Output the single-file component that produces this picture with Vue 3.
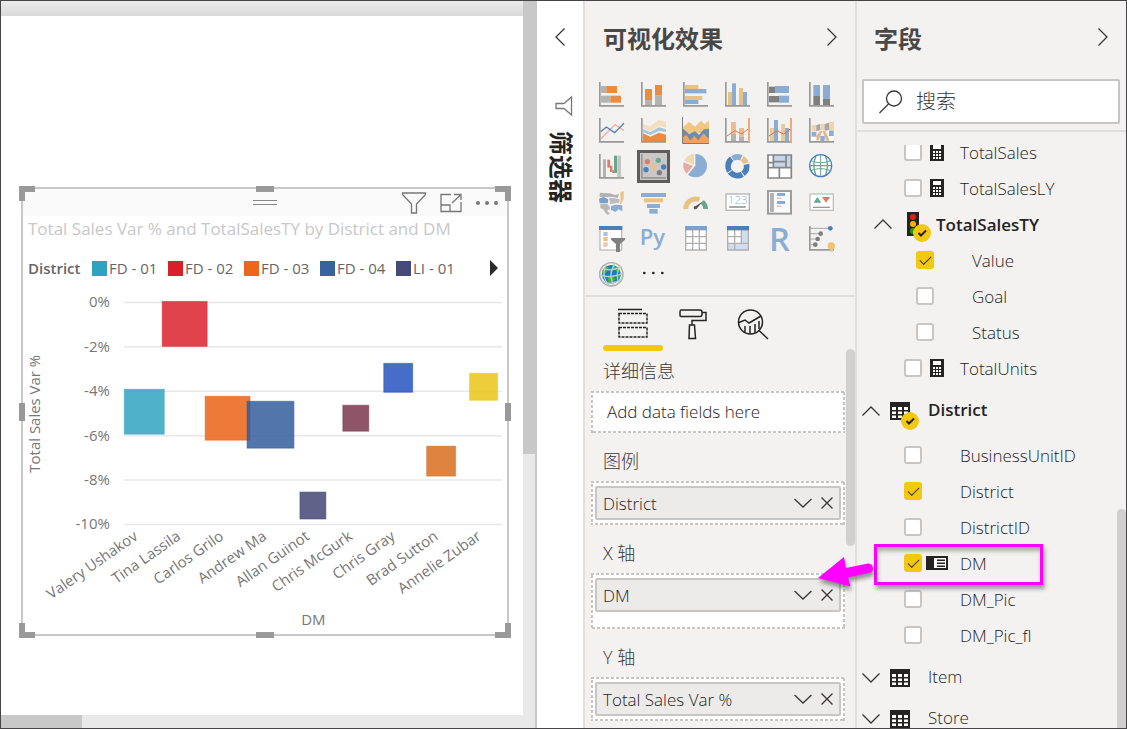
<script setup>
import { ref } from 'vue'

const legend = [
  { name: 'FD - 01', color: '#2ea3c0' },
  { name: 'FD - 02', color: '#db1f2a' },
  { name: 'FD - 03', color: '#ec661c' },
  { name: 'FD - 04', color: '#3962a0' },
  { name: 'LI - 01', color: '#464a78' }
]

const ticks = ['0%', '-2%', '-4%', '-6%', '-8%', '-10%'].map((label, i) => ({
  label,
  y: 302.5 + i * 44.5
}))

const points = [
  { name: 'Valery Ushakov', x: 124, y: 389, w: 41, h: 46, color: '#2ea3c0' },
  { name: 'Tina Lassila', x: 162, y: 301, w: 46, h: 46, color: '#db1f2a' },
  { name: 'Carlos Grilo', x: 205, y: 396, w: 46, h: 45, color: '#ea6012' },
  { name: 'Andrew Ma', x: 247, y: 401, w: 48, h: 48, color: '#315c9b' },
  { name: 'Allan Guinot', x: 300, y: 492, w: 27, h: 28, color: '#414474' },
  { name: 'Chris McGurk', x: 343, y: 405, w: 27, h: 27, color: '#77344a' },
  { name: 'Chris Gray', x: 384, y: 363, w: 30, h: 30, color: '#2252bd' },
  { name: 'Brad Sutton', x: 427, y: 446, w: 30, h: 31, color: '#d96c1b' },
  { name: 'Annelie Zubar', x: 470, y: 373, w: 29, h: 28, color: '#e9c414' }
]

const handles = ['tl', 'tc', 'tr', 'ml', 'mr', 'bl', 'bc', 'br']

const arc = (cx, cy, r, from, to) => {
  const at = (a) => {
    const t = ((a - 90) * Math.PI) / 180
    return `${(cx + r * Math.cos(t)).toFixed(1)} ${(cy + r * Math.sin(t)).toFixed(1)}`
  }
  return `M${at(from)}A${r} ${r} 0 ${to - from > 180 ? 1 : 0} 1 ${at(to)}`
}

const R = (x, y, x2, y2, fill) => ({ t: 'rect', x, y, width: x2 - x, height: y2 - y, fill })
const B = (x, y, x2, y2, stroke, w, fill = 'none') => ({
  t: 'rect', x, y, width: x2 - x, height: y2 - y, fill, stroke, 'stroke-width': w
})
const P = (d, fill) => ({ t: 'path', d, fill })
const L = (d, stroke, w = 4, fill = 'none') => ({ t: 'path', d, fill, stroke, 'stroke-width': w })
const C = (cx, cy, r, fill) => ({ t: 'circle', cx, cy, r, fill })
const axis = L('M14.5 12V83.500H87', '#999', 5)

const OR = '#e68c43', GR = '#b3b3b3', YE = '#e9c283', BL = '#8badd3', DK = '#7f7f7f', DB = '#4a7fb8', GN = '#6aa590', RD = '#e07b66'

const visuals = [
  { name: '堆积条形图', s: [R(18, 24, 34, 45, GR), R(34, 24, 66, 45, OR), R(18, 53, 46, 74, GR), R(46, 53, 78, 74, OR), axis] },
  { name: '堆积柱形图', s: [R(24, 33, 45, 66, OR), R(24, 66, 45, 82, GR), R(54, 21, 75, 53, OR), R(54, 53, 75, 82, GR), axis] },
  { name: '簇状条形图', s: [R(18, 21, 58, 33, YE), R(18, 33, 82, 46, BL), R(18, 54, 70, 66, YE), R(18, 66, 58, 78, BL), axis] },
  { name: '簇状柱形图', s: [R(21, 42, 33, 81, YE), R(33, 16, 45, 81, BL), R(54, 30, 66, 81, YE), R(66, 42, 78, 81, BL), axis] },
  { name: '百分比堆积条形图', s: [R(18, 26, 36, 45, DK), R(36, 24, 78, 45, BL), R(18, 54, 48, 73, DK), R(48, 53, 78, 74, BL), axis] },
  { name: '百分比堆积柱形图', s: [R(25, 21, 45, 54, BL), R(25, 54, 45, 82, DK), R(54, 21, 75, 62, BL), R(54, 62, 75, 82, DK), axis] },

  { name: '折线图', s: [L('M17 75L60 32L87 50', '#ecb3a6'), L('M17 53L34 39L59 56L87 28', DB), axis] },
  { name: '分区图', s: [P('M18 31L40 37L66 17L87 23V41L66 36L40 52L18 43Z', '#f3dfbf'), P('M18 45L40 54L66 40L87 46V54L66 51L40 63L18 54Z', '#a5c6dc'), P('M18 58L40 68L66 56L87 62V82H18Z', OR), axis] },
  { name: '堆积面积图', s: [P('M12 40L30 23L48 38L66 20L76 31L90 20V58H12Z', '#efc682'), P('M12 44L30 60L48 52L60 62L75 46L90 44V88H12Z', '#6c8dac'), P('M12 87V70L22 62L34 80L46 66L58 79L74 58L90 76V87Z', '#f0a266'), L('M10.500 9V88.500H90', '#7c7c7c', 3)] },
  { name: '折线和堆积柱形图', s: [R(30, 24, 45, 60, '#eeba92'), R(30, 60, 45, 82, GR), R(54, 42, 69, 68, '#eeba92'), R(54, 68, 69, 82, GR), L('M18 66L42 50L62 60L84 43', '#e07b50', 3), axis, R(81, 12, 87, 84, '#eeaa78')] },
  { name: '折线和簇状柱形图', s: [R(21, 42, 33, 82, '#e9cb98'), R(33, 18, 45, 82, BL), R(54, 30, 66, 82, '#e9cb98'), R(66, 42, 78, 82, BL), L('M18 66L42 50L62 60L84 43', '#d9694c', 3), axis, R(81, 12, 87, 84, '#eeaa78')] },
  { name: '功能区图表', s: [R(20, 33, 34, 52, '#efd4ad'), P('M34 33L46 30V48L34 52Z', '#a6a6a6'), R(46, 30, 59, 48, '#efd4ad'), P('M59 30L72 26V48L59 50Z', '#a6a6a6'), R(72, 24, 87, 50, '#efd4ad'), R(20, 54, 34, 68, BL), R(46, 50, 59, 64, '#fff'), P('M34 66L46 50H52L40 80H34Z', '#efb083'), P('M52 50H60L74 80H64Z', '#efb083'), R(46, 66, 59, 81, BL), R(72, 50, 86, 66, BL), R(20, 69, 34, 81, '#fff'), R(72, 66, 86, 81, '#fff'), axis] },

  { name: '瀑布图', s: [R(24, 28, 33, 82, GR), R(37, 29, 45, 53, RD), R(45, 47, 52, 66, RD), R(52, 60, 58, 69, RD), R(57, 17, 66, 69, GN), R(67, 17, 78, 82, '#c4c4c4'), axis] },
  { name: '散点图', selected: true, s: [axis, C(31, 35, 8, RD), C(64, 31, 8, GN), C(27, 59, 8, DB), C(51, 51, 8, YE), C(80, 51, 8, DB), C(67, 68, 8, DK)] },
  { name: '饼图', s: [P('M49 47V12A35 35 0 1 1 27 74Z', BL), P('M45 44V12A35 35 0 0 0 16 32Z', '#efd7ae'), P('M42 48L14 37A35 35 0 0 0 23 71Z', '#e9ab9b')] },
  { name: '圆环图', s: [L(arc(49, 49, 28, -31, 25), BL, 17), L(arc(49, 49, 28, 32, 70), YE, 17), L(arc(49, 49, 28, 78, 142), DB, 17), L(arc(49, 49, 28, 148, 232), DB, 17), L(arc(49, 49, 28, 238, 323), DB, 17)] },
  { name: '树状图', s: [R(15, 14, 85, 84, '#fff'), R(32, 14, 85, 52, '#c3d5ea'), L('M15 15H85V84H15ZM15 53H85M31 15V53M69 15V53M31 35H69M15 38H31M49 53V84', '#858585', 5)] },
  { name: '地图', s: [C(47, 47, 32, '#fff'), L('M18 32C36 40 58 40 76 32M18 62C36 54 58 54 76 62M47 15V79', GN, 3), L('M33 18C24 38 24 56 33 76M61 18C70 38 70 56 61 76M15 47H79', GN, 4), L('M47 14A33 33 0 1 0 47 80A33 33 0 1 0 47 14Z', DB, 4)] },

  { name: '着色地图', s: [P('M14 20L44 22L60 27L72 24L68 36L56 33H14Z', GR), P('M12 38L26 33L40 40L38 52H14Z', '#7a9fc9'), P('M42 36H58L74 40L72 50L46 54Z', '#bdbdbd'), P('M16 54H36L44 62V70L36 74L46 84L36 86L24 70L16 66Z', '#b8b8b8'), P('M48 60L62 56L82 58V76L70 70L62 78L48 72Z', BL), P('M76 18L86 16V38L78 54L74 56L77 40Z', YE)] },
  { name: '漏斗图', s: [R(12, 21, 87, 33, BL), R(21, 37, 78, 49, YE), R(30, 54, 69, 66, BL), R(37, 69, 62, 83, BL)] },
  { name: '仪表', s: [L('M20 69A30 30 0 0 1 61 41', YE, 15), L('M70 47A30 30 0 0 1 80 69', GN, 14), P('M47 62L72 46L52 69Z', '#555'), C(49, 65, 5, '#555')] },
  { name: '卡片图', s: [B(15, 24, 85, 73, '#b3b3b3', 4, '#fff'), { t: 'text', x: 50, y: 54, 'font-size': 34, 'text-anchor': 'middle', fill: BL, label: '123' }, L('M24 63H74', DK, 4)] },
  { name: '多行卡', s: [B(15, 15, 84, 83, '#9d9d9d', 6, '#fafafa'), R(21, 21, 33, 78, GR), R(42, 21, 66, 30, BL), R(42, 34, 55, 39, '#ccc'), R(42, 45, 66, 54, BL), R(42, 58, 55, 63, '#ccc')] },
  { name: 'KPI', s: [B(15, 24, 85, 73, '#c0c0c0', 4, '#fff'), P('M26 50L37 33L49 50Z', GN), P('M51 33H76L63 50Z', RD), L('M24 64H75', '#999', 4)] },

  { name: '切片器', s: [B(15, 15, 80, 84, '#bdbdbd', 4, '#fff'), R(12, 12, 82, 24, DB), R(25, 30, 38, 42, '#aac4e2'), R(25, 45, 38, 57, YE), R(25, 61, 38, 74, '#efc4b4'), P('M48 48H90V53L75 66V90H63V66L48 53Z', '#808080')] },
  { name: 'Python 视觉对象', s: [{ t: 'text', x: 8, y: 68, 'font-size': 66, 'font-weight': 600, fill: BL, label: 'Py' }] },
  { name: '表', s: [R(19, 14, 83, 85, '#fff'), L('M20 24V84H82V24M20 44H82M20 64H82M41 24V84M61 24V84', '#b0b0b0', 4), R(18, 12, 84, 25, '#7ba1cc')] },
  { name: '矩阵', s: [R(19, 14, 83, 85, '#fff'), R(62, 24, 82, 84, '#cfdfee'), R(20, 64, 82, 84, '#cfdfee'), L('M20 24V84H82V24M20 44H62M20 64H82M41 24V84M61 24V64', '#b0b0b0', 4), R(18, 12, 84, 25, DB)] },
  { name: 'R 脚本视觉对象', s: [{ t: 'text', x: 18, y: 86, 'font-size': 98, 'font-weight': 600, fill: BL, label: 'R' }] },
  { name: '关键影响者', s: [L('M16 19H76M16 35H47M16 51H38M16 68H31', '#a8a8a8', 3), axis, C(76, 19, 7, DB), C(47, 35, 7, DK), C(38, 51, 7, DK), C(31, 68, 7, DK), C(79, 72, 11, '#efc46c'), R(75, 82, 84, 90, '#e3cfa0')] },

  { name: 'ArcGIS 地图', s: [C(49, 49, 36, '#eef0ee'), C(49, 49, 28, '#1279c8'), P('M22 38L34 24L44 30L36 42L24 52ZM52 22L70 28L76 44L66 42L58 34ZM38 58L56 50L62 64L50 76L38 70ZM66 52L78 50L72 66Z', '#3fae49'), L('M49 14A35 35 0 1 0 49 84A35 35 0 1 0 49 14Z', '#a8a8a8', 4), L('M20 30C40 40 60 36 80 26M14 50C36 62 62 54 84 46M20 70C40 80 64 74 82 62M36 16C22 40 26 64 42 83M60 16C44 40 44 62 58 83M74 24C64 44 66 64 72 76', '#bccdc9', 4)] },
  { name: '更多选项', s: [C(22, 45, 4, '#222'), C(49, 45, 4, '#222'), C(76, 45, 4, '#222')] }
]

const wells = [
  { label: '详细信息', field: '' },
  { label: '图例', field: 'District' },
  { label: 'X 轴', field: 'DM', tall: true },
  { label: 'Y 轴', field: 'Total Sales Var %' }
]

const fields = ref([
  { kind: 'field', name: 'TotalSales', icon: 'calc', on: false },
  { kind: 'field', name: 'TotalSalesLY', icon: 'calc', on: false },
  { kind: 'kpi', name: 'TotalSalesTY' },
  { kind: 'sub', name: 'Value', on: true },
  { kind: 'sub', name: 'Goal', on: false },
  { kind: 'sub', name: 'Status', on: false },
  { kind: 'field', name: 'TotalUnits', icon: 'calc', on: false },
  { kind: 'table', name: 'District', open: true },
  { kind: 'field', name: 'BusinessUnitID', on: false },
  { kind: 'field', name: 'District', on: true },
  { kind: 'field', name: 'DistrictID', on: false },
  { kind: 'field', name: 'DM', icon: 'card', on: true },
  { kind: 'field', name: 'DM_Pic', on: false },
  { kind: 'field', name: 'DM_Pic_fl', on: false },
  { kind: 'table', name: 'Item', first: true },
  { kind: 'table', name: 'Store' }
])
</script>

<template>
  <div class="app">
    <main class="canvas">
      <div class="page">
        <div class="ribbon-edge"></div>
        <section class="visual">
          <i v-for="h in handles" :key="h" class="handle" :class="h"></i>
          <header class="visual-bar">
            <span class="grip"></span>
            <div class="visual-tools">
              <button aria-label="筛选器"><svg width="26" height="24" viewBox="0 0 26 24"><path d="M1.500 2H24.500V3.500L15.500 13V22H10.500V13L1.500 3.500Z" /></svg></button>
              <button aria-label="焦点模式"><svg width="24" height="20" viewBox="0 0 24 20"><path d="M12 1.500H2V18.500H22V9M2 12H11V18M13 10L21.500 2M15 1.500H22V7" /></svg></button>
              <button aria-label="更多选项"><svg width="24" height="20" viewBox="0 0 24 20"><g class="dots"><circle cx="3" cy="10" r="2" /><circle cx="12" cy="10" r="2" /><circle cx="21" cy="10" r="2" /></g></svg></button>
            </div>
          </header>
          <h2 class="visual-title">Total Sales Var % and TotalSalesTY by District and DM</h2>
          <div class="legend">
            <b>District</b>
            <ul>
              <li v-for="l in legend" :key="l.name"><i :style="{ background: l.color }"></i>{{ l.name }}</li>
            </ul>
            <button aria-label="下一页"><svg width="10" height="16" viewBox="0 0 10 16"><path d="M1 0L9 8L1 16Z" fill="#2b2b2b" /></svg></button>
          </div>
          <svg class="plot" viewBox="23 286 485 349">
            <g v-for="t in ticks" :key="t.label">
              <path :d="`M124 ${t.y}H503`" stroke="#e8e8e8" stroke-width="1.500" />
              <text x="110" :y="t.y + 5" text-anchor="end">{{ t.label }}</text>
            </g>
            <rect v-for="p in points" :key="p.name" :x="p.x + 0.5" :y="p.y + 0.5" :width="p.w - 1" :height="p.h - 1" :fill="p.color" :stroke="p.color" fill-opacity="0.84" stroke-opacity="0.5" />
            <text v-for="(p, i) in points" :key="'n' + i" text-anchor="end" :transform="`translate(${139 + i * 43} 539) rotate(-35)`">{{ p.name }}</text>
            <text text-anchor="middle" transform="translate(40 414) rotate(-90)">Total Sales Var %</text>
            <text x="314" y="626" text-anchor="middle">DM</text>
          </svg>
        </section>
        <div class="h-scroll"><i></i></div>
      </div>
      <div class="v-scroll"><i></i></div>
    </main>

    <aside class="filters">
      <button aria-label="展开"><svg width="12" height="20" viewBox="0 0 12 20"><path d="M10.500 1.500L2 10L10.500 18.500" /></svg></button>
      <svg class="filter-icon" width="20" height="22" viewBox="0 0 20 22"><path d="M17.500 2V20L10 13.500H2V8.500H10Z" /></svg>
      <h2>筛选器</h2>
    </aside>

    <section class="viz">
      <header class="pane-head">
        <h1>可视化效果</h1>
        <button aria-label="折叠可视化效果"><svg width="12" height="20" viewBox="0 0 12 20"><path d="M1.500 1.500L10 10L1.500 18.500" /></svg></button>
      </header>
      <div class="gallery">
        <button v-for="v in visuals" :key="v.name" :class="{ selected: v.selected }" :aria-label="v.name">
          <svg viewBox="0 0 99 99">
            <template v-for="(s, i) in v.s" :key="i">
              <text v-if="s.t === 'text'" v-bind="s">{{ s.label }}</text>
              <component :is="s.t" v-else v-bind="s" />
            </template>
          </svg>
        </button>
      </div>
      <nav class="tabs">
        <button class="active" aria-label="字段"><svg width="32" height="32" viewBox="0 0 32 32"><path d="M1 1.500H25" /><path d="M2 5.500H30V15H2ZM2 19.500H30V29H2Z" stroke-dasharray="3 1" /></svg></button>
        <button aria-label="格式"><svg width="32" height="32" viewBox="0 0 32 32"><path d="M4 2H23Q25 2 25 4V6.500Q25 8.500 23 8.500H4Q3 8.500 3 7V4Q3 2 4 2ZM25 4.500H29V12.500H15V17M12.500 17H17.500L18.500 30.500H12Z" /></svg></button>
        <button aria-label="分析"><svg width="32" height="32" viewBox="0 0 32 32"><circle cx="13.500" cy="14" r="12" /><path d="M2 14.500L8 12L12 15L24 8M8 18V24M13 18V26M18 16V25M22 13V21M22 22.500L31 31" /></svg></button>
      </nav>
      <div class="wells">
        <div v-for="w in wells" :key="w.label" class="group">
          <h3>{{ w.label }}</h3>
          <div class="well" :class="{ tall: w.tall, empty: !w.field }">
            <svg class="dash"><rect width="100%" height="100%" /></svg>
            <template v-if="!w.field">Add data fields here</template>
            <div v-else class="chip">
              <span>{{ w.field }}</span>
              <button aria-label="打开菜单"><svg width="20" height="14" viewBox="0 0 20 14"><path d="M1.500 3L10 11L18.500 3" /></svg></button>
              <button aria-label="删除字段"><svg width="14" height="14" viewBox="0 0 14 14"><path d="M1.500 1.500L12.500 12.500M12.500 1.500L1.500 12.500" /></svg></button>
            </div>
          </div>
        </div>
        <i class="thumb"></i>
      </div>
    </section>

    <section class="fields">
      <header class="pane-head">
        <h1>字段</h1>
        <button aria-label="折叠字段"><svg width="12" height="20" viewBox="0 0 12 20"><path d="M1.500 1.500L10 10L1.500 18.500" /></svg></button>
      </header>
      <label class="search">
        <svg width="26" height="26" viewBox="0 0 26 26"><circle cx="16" cy="9.500" r="7.500" /><path d="M10.500 15L1.500 24" /></svg>
        <input type="search" placeholder="搜索" aria-label="搜索" />
      </label>
      <div class="list">
        <div class="list-inner">
          <template v-for="(f, i) in fields" :key="i">
            <div v-if="f.kind === 'table'" class="row table" :class="{ open: f.open, first: f.first }">
              <button :aria-label="f.name"><svg width="20" height="12" viewBox="0 0 20 12"><path :d="f.open ? 'M1.500 10.500L10 2L18.500 10.500' : 'M1.500 1.500L10 10L18.500 1.500'" /></svg></button>
              <span class="glyph">
                <svg width="20" height="18" viewBox="0 0 20 18"><path class="ink" d="M0 0H20V18H0Z" /><path class="paper" d="M2 5H6V8H2ZM8 5H12V8H8ZM14 5H18V8H14ZM2 9.500H6V12H2ZM8 9.500H12V12H8ZM14 9.500H18V12H14ZM2 13.500H6V16H2ZM8 13.500H12V16H8ZM14 13.500H18V16H14Z" /></svg>
                <svg v-if="f.open" class="badge" width="18" height="18" viewBox="0 0 18 18"><circle cx="9" cy="9" r="9" /><path d="M5.500 9L8 11.500L13 6.500" /></svg>
              </span>
              <strong v-if="f.open">{{ f.name }}</strong>
              <span v-else class="name">{{ f.name }}</span>
            </div>
            <div v-else-if="f.kind === 'kpi'" class="row kpi">
              <button :aria-label="f.name"><svg width="20" height="12" viewBox="0 0 20 12"><path d="M1.500 10.500L10 2L18.500 10.500" /></svg></button>
              <span class="glyph">
                <svg width="12" height="24" viewBox="0 0 12 24"><path class="ink" d="M0 0H12V24H0Z" /><circle cx="6" cy="5" r="3" fill="#e81c0c" /><circle cx="6" cy="12" r="3" fill="#fbb000" /><circle cx="6" cy="19" r="3" fill="#1e9a1e" /></svg>
                <svg class="badge" width="18" height="18" viewBox="0 0 18 18"><circle cx="9" cy="9" r="9" /><path d="M5.500 9L8 11.500L13 6.500" /></svg>
              </span>
              <strong>{{ f.name }}</strong>
            </div>
            <label v-else class="row leaf" :class="f.kind">
              <input v-model="f.on" type="checkbox" />
              <span class="kind">
                <svg v-if="f.icon === 'calc'" width="14" height="18" viewBox="0 0 14 18"><path class="ink" d="M0 0H14V18H0Z" /><path class="paper" d="M3 2H11V6H3ZM3 8H5V10H3ZM6 8H8V10H6ZM9 8H11V10H9ZM3 11H5V13H3ZM6 11H8V13H6ZM9 11H11V13H9ZM3 14H5V16H3ZM6 14H8V16H6ZM9 14H11V16H9Z" /></svg>
                <svg v-if="f.icon === 'card'" width="22" height="14" viewBox="0 0 22 14"><path class="ink" d="M0 0H22V14H0Z" /><path class="paper" d="M8 2H20V12H8Z" /><path class="ink" d="M11 3.500H19V5H11ZM11 6.500H19V8H11ZM11 9.500H19V11H11Z" /></svg>
              </span>
              <span class="name">{{ f.name }}</span>
            </label>
          </template>
        </div>
        <i class="thumb"></i>
      </div>
    </section>

    <div class="callout">
      <svg width="64" height="40" viewBox="0 0 64 40"><path d="M6 25L32 4L34 15L56 10.500A5 5 0 0 1 59 19.500L36 24.500L38.500 33.500Z" fill="#f0f" /></svg>
    </div>
  </div>
</template>

<style>
body { overflow: hidden; }
</style>

<style scoped>
* { box-sizing: border-box; }
.app {
  position: relative;
  display: flex;
  height: 100vh;
  border: 1px solid #464446;
  background: #f3f2f1;
  color: #252423;
  font-family: "Open Sans", "Noto Sans CJK SC", sans-serif;
  font-size: 17px;
  font-weight: 300;
  overflow: hidden;
}
h1, h2, h3, ul { margin: 0; padding: 0; list-style: none; font-weight: 400; }
button { display: flex; align-items: center; justify-content: center; padding: 0; border: 0; background: none; color: inherit; font: inherit; }
svg { display: block; flex: none; }
button > svg, .filter-icon, .search svg { fill: none; stroke: #3a3836; stroke-width: 1.3; }

.canvas { flex: 1; min-width: 0; display: flex; background: #fff; font-weight: 400; }
.page { flex: 1; min-width: 0; display: flex; flex-direction: column; }
.ribbon-edge { height: 15px; background: linear-gradient(#ececec, #d9d9d9); }
.v-scroll { width: 14px; background: #e9e9e9; border-right: 2px solid #c8c8c8; }
.v-scroll i { display: block; height: 453px; background: #c8c8c8; }
.h-scroll { height: 13px; margin-top: auto; background: #e9e9e9; }
.h-scroll i { display: block; width: 81px; height: 100%; background: #c8c8c8; }

.visual { position: relative; margin: 171px 14px 0 20px; border: 2px solid #c8c8c8; background: #fff; }
.handle { position: absolute; background: #999; }
.tl, .tr, .bl, .br { width: 16px; height: 15px; background: none; border: 0 solid #999; }
.tl { left: -4px; top: -3px; border-width: 6px 0 0 6px; }
.tr { right: -4px; top: -3px; border-width: 6px 6px 0 0; }
.bl { left: -4px; bottom: -4px; border-width: 0 0 6px 6px; }
.br { right: -4px; bottom: -4px; border-width: 0 6px 6px 0; }
.tc, .bc { left: calc(50% - 9px); width: 18px; height: 6px; }
.tc { top: -3px; }
.bc { bottom: -4px; }
.ml, .mr { top: calc(50% - 9px); width: 6px; height: 18px; }
.ml { left: -4px; }
.mr { right: -4px; }
.visual-bar { display: grid; grid-template-columns: 1fr 24px 1fr; align-items: center; height: 27px; background: #fafafa; }
.grip { grid-column: 2; height: 5px; border: 1px solid #888; border-width: 1px 0; }
.visual-tools { display: flex; justify-content: flex-end; align-items: center; gap: 12px; padding-right: 8px; }
.visual-tools svg { stroke: #777; }
.dots { fill: #777; stroke: none; }
.visual-title { padding-left: 5px; color: #c8c8c8; font-size: 17px; line-height: 26px; white-space: nowrap; }
.legend { display: flex; align-items: center; height: 22px; margin: 15px 8px 7px 5px; color: #666; font-size: 15px; white-space: nowrap; }
.legend b { width: 64px; font-weight: 600; }
.legend ul { display: flex; flex: 1; }
.legend li { display: flex; align-items: center; gap: 2px; width: 76px; }
.legend i { width: 15px; height: 15px; }
.legend svg { stroke: none; }
.plot { width: 100%; height: auto; fill: #777; font-size: 15px; }

.filters { width: 46px; display: flex; flex-direction: column; align-items: center; padding-top: 26px; background: #fff; }
.filter-icon { margin: 48px 0 0 8px; stroke: #777; }
.filters h2 { margin: 14px 0 0 2px; writing-mode: vertical-rl; text-orientation: sideways; font-size: 24px; line-height: 28px; font-weight: 700; }

.viz { width: 274px; display: flex; flex-direction: column; border: solid #e1dfdd; border-width: 0 2px; }
.pane-head { display: flex; align-items: center; justify-content: space-between; height: 72px; padding: 0 17px 0 18px; color: #4a4846; }
.pane-head h1 { font-size: 24px; line-height: 32px; font-weight: 600; padding-top: 4px; }
.fields .pane-head { padding: 0 17px; }
.gallery { display: grid; grid-template-columns: repeat(6, 33px); gap: 3px 9px; padding: 5px 10px 4px; }
.gallery button { height: 33px; }
.gallery svg { width: 33px; height: 33px; stroke: none; overflow: visible; }
.gallery .selected { background: #c9c8c7; box-shadow: inset 0 0 0 3px #5f5d5b; }
.tabs { display: flex; padding-left: 18px; border-top: 2px solid #e1dfdd; }
.tabs button { width: 60px; height: 54px; padding-top: 11px; align-items: flex-start; }
.tabs svg { stroke: #252423; stroke-width: 1.5; }
.tabs .active { position: relative; }
.tabs .active::after { content: ""; position: absolute; left: 0; right: 0; bottom: 0; height: 6px; border-radius: 3px; background: #f2c811; }
.wells { position: relative; flex: 1; min-height: 0; padding: 8px 10px 0 6px; display: flex; flex-direction: column; gap: 16px; }
.group h3 { padding: 0 12px; margin-bottom: 8px; font-size: 18px; line-height: 24px; font-weight: 300; color: #3a3836; }
.well { position: relative; height: 44px; padding: 5px 4px; background: #fff; }
.well.empty { height: 42px; padding: 0 16px; line-height: 42px; }
.well.tall { height: 56px; }
.dash { position: absolute; left: 0; top: 0; width: 100%; height: 100%; fill: none; stroke: #c8c6c4; stroke-width: 4; stroke-dasharray: 3 2; pointer-events: none; }
.chip { display: flex; align-items: center; height: 34px; padding: 0 5px 0 6px; border: 2px solid #c8c6c4; border-radius: 2px; background: #edebe9; }
.chip span { flex: 1; }
.chip button + button { margin-left: 7px; }
.thumb { position: absolute; right: 0; width: 9px; background: #d2d0ce; border-radius: 5px; }
.wells .thumb { top: -2px; height: 197px; }

.fields { flex: none; width: 269px; display: flex; flex-direction: column; }
.search { display: flex; align-items: center; height: 45px; margin: 6px 6px 6px 5px; padding: 0 14px; gap: 12px; border: 2px solid #c8c6c4; border-radius: 2px; background: #fff; }
.search input { flex: 1; min-width: 0; padding: 0; border: 0; outline: 0; background: none; font: inherit; font-size: 20px; color: #3a3836; }
.search input::placeholder { color: #3a3836; opacity: 1; }
.list { position: relative; flex: 1; min-height: 0; padding-top: 2px; border-top: 2px solid #e1dfdd; }
.list-inner { height: 100%; overflow: hidden; }
.list .thumb { top: 377px; bottom: -9px; }
.row { display: flex; align-items: center; height: 36px; flex: none; }
.row:first-child input, .row:first-child .kind { clip-path: inset(2px 0 0 0); }
.row.table { height: 41px; padding-left: 4px; }
.row.open { margin: 4px 0 6px; }
.row.first { margin-top: 4px; }
.row.kpi { padding-left: 16px; }
.glyph { position: relative; margin-left: 9px; }
.kpi .glyph { margin-left: 14px; }
.row strong { margin-left: 18px; font-weight: 600; color: #252423; padding-bottom: 3px; }
.kpi strong { margin-left: 17px; padding-bottom: 0; }
.table .name { margin-left: 18px; padding-bottom: 3px; }
.badge { position: absolute; left: 11px; top: 10px; fill: #f2c811; }
.kpi .badge { left: 6px; top: 12px; }
.badge path { fill: none; stroke: #252423; stroke-width: 2; }
.ink { fill: #252423; }
.paper { fill: #fff; }
.leaf { padding-left: 47px; }
.leaf.sub { padding-left: 59px; }
.leaf input { appearance: none; flex: none; width: 18px; height: 18px; margin: 0; border: 2px solid #c8c6c4; border-radius: 3px; background: #fff; display: grid; place-items: center; }
.leaf input:checked { border-color: #f2c811; background: #f2c811; }
.leaf input:checked::after { content: ""; width: 10px; height: 5px; border: solid #3a3836; border-width: 0 0 1px 1px; transform: translateY(-1px) rotate(-45deg); }
.kind { display: flex; justify-content: center; width: 30px; margin-right: 8px; }

.callout { position: absolute; top: 543px; right: 83px; width: 169px; height: 41px; border: 3px solid #f0f; box-shadow: 2px 4px 4px rgba(0, 0, 0, 0.35), inset 1px 4px 4px rgba(0, 0, 0, 0.3); pointer-events: none; }
.callout svg { position: absolute; left: -65px; top: 6px; filter: drop-shadow(1px 4px 2px rgba(0, 0, 0, 0.4)); }
</style>
